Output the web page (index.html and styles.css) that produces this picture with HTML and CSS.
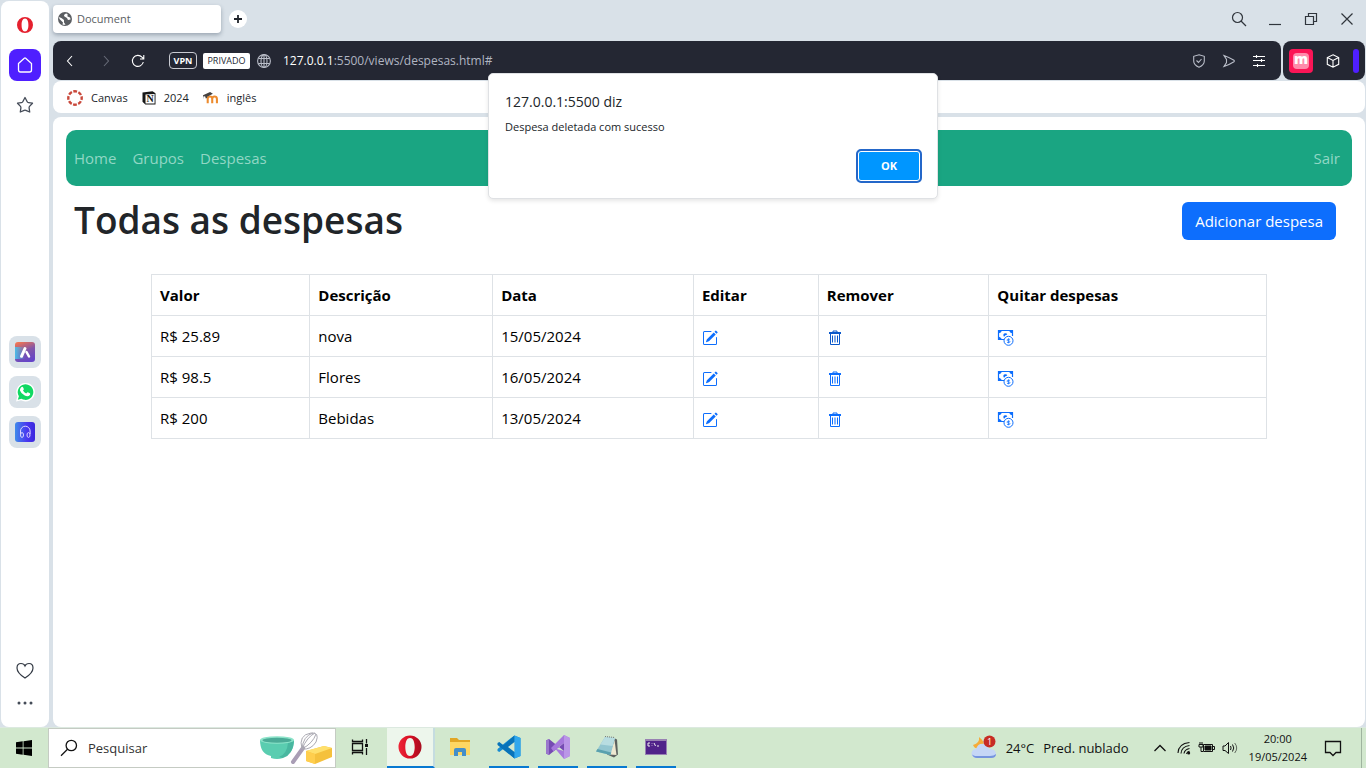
FILE: index.html
```html
<!DOCTYPE html>
<html lang="pt-BR">
<head>
<meta charset="utf-8">
<title>Document</title>
<link rel="stylesheet" href="styles.css">
</head>
<body>
<svg class="defs" aria-hidden="true">
  <symbol id="edit" viewBox="0 0 16 16"><path d="M15.502 1.94a.5.5 0 0 1 0 .706L14.459 3.69l-2-2L13.502.646a.5.5 0 0 1 .707 0l1.293 1.293zm-1.75 2.456-2-2L4.939 9.21a.5.5 0 0 0-.121.196l-.805 2.414a.25.25 0 0 0 .316.316l2.414-.805a.5.5 0 0 0 .196-.12l6.813-6.814z" fill="currentColor"/><path d="M1 13.500A1.500 1.500 0 0 0 2.500 15h11a1.500 1.500 0 0 0 1.500-1.500v-6a.5.5 0 0 0-1 0v6a.5.5 0 0 1-.5.5h-11a.5.5 0 0 1-.5-.5v-11a.5.5 0 0 1 .5-.5H9a.5.5 0 0 0 0-1H2.500A1.500 1.500 0 0 0 1 2.500z" fill="currentColor"/></symbol>
  <symbol id="trash" viewBox="0 0 16 16"><path d="M2 2.500h12M2 3.500h12M6 2V1h4v1M3.500 4v10.500h9V4" fill="none" stroke="currentColor"/><path d="M5.500 5.500v7M10.500 5.500v7" stroke="currentColor"/><path d="M8 5.500v7" stroke="currentColor" stroke-width="2" opacity=".5"/></symbol>
  <symbol id="cash" viewBox="0 0 17 17"><path d="M7 10.500H1.500v-9h14V7" fill="none" stroke="currentColor" stroke-width="1.200"/><path d="M1 1h4Q4.500 4 1 4.500zM16 1h-4q.5 3 4 3.500zM1 11h4Q4.500 8 1 7.500zM6.500 7q-.6-2.500 1.700-2.700Q10 4.200 10.300 5.500 8 6 7.500 7.500 6.800 7.500 6.500 7z" fill="currentColor"/><circle cx="11.500" cy="11.800" r="4.500" fill="#fff" stroke="currentColor"/><path d="M13 10.300h-2q-1 0-1 .8t1 .8h1q1 0 1 .8t-1 .8h-2M11.500 9.300v5" fill="none" stroke="currentColor" stroke-width=".7"/></symbol>
</svg>

<div class="browser">
  <nav class="sidebar" aria-label="Barra lateral">
    <button class="side-btn" aria-label="Opera"><svg width="18" height="18" viewBox="0 0 18 18"><path fill="#e5202e" fill-rule="evenodd" d="M9 1a8 8 0 1 1 0 16A8 8 0 0 1 9 1zm0 1.500C6.500 2.500 5.600 5.500 5.600 9S6.500 15.500 9 15.500s3.400-3 3.400-6.500S11.500 2.500 9 2.500z"/></svg></button>
    <button class="side-btn home" aria-label="Início"><svg width="18" height="18" viewBox="0 0 18 18" fill="none" stroke="#fff" stroke-width="1.300"><path d="M2.500 7.500 8.300 2.200q.7-.5 1.400 0l5.800 5.300V14q0 2-2 2h-9q-2 0-2-2z"/></svg></button>
    <button class="side-btn" aria-label="Favoritos"><svg width="18" height="18" viewBox="0 0 18 18" fill="none" stroke="#444b57" stroke-width="1.300" stroke-linejoin="round"><path d="m9 1.500 2.200 4.200q.4.800 1.300.9l4 .6-3 3.200q-.5.600-.4 1.400l.6 4.200-3.900-1.700q-.8-.3-1.600 0L4.300 16l.6-4.200q.1-.8-.4-1.400l-3-3.200 4-.6q.9-.1 1.300-.9z"/></svg></button>
    <div class="side-apps">
      <button class="side-btn app" aria-label="Aria"><svg width="20" height="20" viewBox="0 0 20 20"><defs><linearGradient id="g1" x1=".2" y1="0" x2=".6" y2="1"><stop stop-color="#f27552"/><stop offset=".5" stop-color="#8155a8"/><stop offset="1" stop-color="#6545c8"/></linearGradient><linearGradient id="g2"><stop stop-color="#4cbce8"/><stop offset=".5" stop-color="#4cbce8" stop-opacity="0"/></linearGradient></defs><rect width="20" height="20" rx="3" fill="url(#g1)"/><rect y="5" width="20" height="12" fill="url(#g2)"/><path d="M6.500 14.300 10 6.500" stroke="#fff" stroke-width="3" stroke-linecap="round"/><path d="m11.500 10 2.500 4.500" stroke="#fff" stroke-width="2.500" stroke-linecap="round"/></svg></button>
      <button class="side-btn app" aria-label="WhatsApp"><svg width="20" height="20" viewBox="0 0 20 20"><path d="M1 19.500 2.300 14.500A9.300 9.300 0 1 1 6 18.300z" fill="#fff"/><path d="m2.800 17.800 1.100-3.600a7.800 7.800 0 1 1 2.500 2.500z" fill="#10d963"/><path d="M6 5.500q1.500-1.500 2.300.3l.5 1.300q.2.600-.8 1.500 1 2 3.200 3l1-1q.5-.5 1.100-.1l1.500.8q1 .6.100 1.800-2 2.100-5.200.5-3.800-2-4.700-5Q4.700 6.800 6 5.500z" fill="#fff"/></svg></button>
      <button class="side-btn app" aria-label="Player"><svg width="20" height="20" viewBox="0 0 20 20"><defs><linearGradient id="g3"><stop stop-color="#408bea"/><stop offset=".6" stop-color="#4a37f0"/><stop offset="1" stop-color="#3a27dd"/></linearGradient></defs><rect width="20" height="20" rx="3" fill="url(#g3)"/><path d="M5.500 12V9a4.800 4.800 0 0 1 9.600 0v3" stroke="#dcd5ff" fill="none"/><ellipse cx="7" cy="13" rx="1.500" ry="2.400" stroke="#dcd5ff" fill="none"/><ellipse cx="13.500" cy="13" rx="1.500" ry="2.400" stroke="#dcd5ff" fill="none"/></svg></button>
    </div>
    <div class="side-foot">
      <button class="side-btn" aria-label="Curtir"><svg width="18" height="18" viewBox="0 0 18 18" fill="none" stroke="#333a44" stroke-width="1.200"><path d="M9 16Q1 11 1 6 1 1.500 5 1.500q3 0 4 2.500Q10 1.500 13 1.500q4 0 4 4.500 0 5-8 10z"/></svg></button>
      <button class="side-btn" aria-label="Mais"><svg width="18" height="18" viewBox="0 0 18 18" fill="#444b57"><circle cx="3" cy="9" r="1.500"/><circle cx="9" cy="9" r="1.500"/><circle cx="15" cy="9" r="1.500"/></svg></button>
    </div>
  </nav>

  <div class="main">
    <header class="tabs">
      <div class="tab"><svg width="14" height="14" viewBox="0 0 14 14"><circle cx="7" cy="7" r="7" fill="#5b5e62"/><path d="M1 5q3 1 5 3v2.500L7.500 12.500Q6 13 4.500 12.500L5 10.500 1.500 7zM8 1.500Q5 3 6.500 4.500L9 6l1 2 2.500-.5Q12.500 6.500 12 5.500L9.500 4.500 9.500 2z" fill="#fff"/></svg><span>Document</span></div>
      <button class="new-tab" aria-label="Nova guia"><svg width="10" height="10" viewBox="0 0 10 10"><path d="M5 1v8M1 5h8" stroke="#20242b" stroke-width="1.800"/></svg></button>
      <div class="window-btns">
        <button aria-label="Pesquisar guias"><svg width="16" height="16" viewBox="0 0 16 16"><circle cx="6.500" cy="6.500" r="5"/><path d="m10 10 5 5"/></svg></button>
        <button aria-label="Minimizar"><svg width="16" height="16" viewBox="0 0 16 16"><path d="M2 13.500h12"/></svg></button>
        <button aria-label="Restaurar"><svg width="16" height="16" viewBox="0 0 16 16"><path d="M2.500 5.500h8v8h-8zM5.500 5V2.500h8v8H11"/></svg></button>
        <button aria-label="Fechar"><svg width="16" height="16" viewBox="0 0 16 16"><path d="m2.500 2.500 11 11m0-11-11 11"/></svg></button>
      </div>
    </header>

    <div class="toolbar">
      <div class="address">
        <div class="nav-btns">
          <button aria-label="Voltar"><svg width="14" height="14" viewBox="0 0 14 14"><path d="M9 2 4.500 7 9 12"/></svg></button>
          <button class="dim" aria-label="Avançar"><svg width="14" height="14" viewBox="0 0 14 14"><path d="m7 2 4.500 5L7 12"/></svg></button>
          <button aria-label="Recarregar"><svg width="14" height="14" viewBox="0 0 14 14"><path d="M12.300 8A5.500 5.500 0 1 1 11 3.200l1.500 1.500M12.800 1v4H9"/></svg></button>
        </div>
        <span class="vpn">VPN</span>
        <span class="private">PRIVADO</span>
        <svg class="globe" width="14" height="14" viewBox="0 0 14 14"><circle cx="7" cy="7" r="6.400"/><ellipse cx="7" cy="7" rx="3" ry="6.400"/><path d="M1.500 4.500h11M1.500 9.500h11M7 .6v12.800"/></svg>
        <span class="url"><b>127.0.0.1</b>:5500/views/despesas.html#</span>
        <div class="addr-actions">
          <button class="soft" aria-label="Segurança"><svg width="14" height="14" viewBox="0 0 14 14"><path d="m7 .8 5.300 1.500V7q0 4-5.300 6.200Q1.700 11 1.700 7V2.300zM4.500 6.500 6.500 8.500l3-3.500"/></svg></button>
          <button class="soft" aria-label="Enviar"><svg width="14" height="14" viewBox="0 0 14 14"><path d="M2 1.500q5.500 2 10 4.800.8.700 0 1.400Q7.500 10.500 2 12.500L4.500 8.500V5.500z"/></svg></button>
          <button aria-label="Configurações"><svg width="14" height="14" viewBox="0 0 14 14"><path d="M1 2.500h12M1 6.500h12M1 11.500h12M4.500 1v3M9.500 5v3M5.500 10v3"/></svg></button>
        </div>
      </div>
      <div class="extensions">
        <button class="m-logo"><span>m</span></button>
        <button aria-label="Extensões"><svg width="14" height="14" viewBox="0 0 14 14"><path d="m7 .8 5.700 2.700v6.800L7 13.200l-5.700-2.900V3.500zM1.300 3.500 7 6.500l5.700-3M7 6.500v6.700"/></svg></button>
        <i class="handle"></i>
      </div>
    </div>

    <nav class="bookmarks" aria-label="Favoritos">
      <a href="#"><svg width="16" height="16" viewBox="0 0 16 16"><circle cx="8" cy="8" r="6.700" fill="none" stroke="#c9483b" stroke-width="2.400" stroke-dasharray="3.760 1.500" stroke-dashoffset="1.900"/></svg>Canvas</a>
      <a href="#"><svg width="14" height="14" viewBox="0 0 14 14"><path d="M.5 1.500 10.500.3l3 1.900v11.300H3.300L.5 10.800z" fill="#171717"/><path d="M3.500 3.500 12.600 3v9.500H3.500z" fill="#fff"/><text x="8" y="11" text-anchor="middle" class="n-mark">N</text></svg>2024</a>
      <a href="#"><svg width="16" height="14" viewBox="0 0 17 14"><path d="M5 12.500V7.800q.2-2.300 2.400-2.300T9.800 7.800v4.700M9.800 8q.2-2.500 2.500-2.500t2.500 2.500v4.500" fill="none" stroke="#ed8b2d" stroke-width="2.200"/><path d="m0 4 7.500-3.500 3 2-6 3.300L4.300 7 3 7.500l-.8-2.300-1.700.3v3z" fill="#464241"/></svg>inglês</a>
    </nav>

    <main class="page">
      <nav class="navbar" aria-label="Principal">
        <a href="#">Home</a><a href="#">Grupos</a><a href="#">Despesas</a><a href="#" class="logout">Sair</a>
      </nav>
      <div class="title-row">
        <h1>Todas as despesas</h1>
        <button class="add">Adicionar despesa</button>
      </div>
      <table>
        <colgroup><col class="c1"><col class="c2"><col class="c3"><col class="c4"><col class="c5"><col class="c6"></colgroup>
        <thead><tr><th>Valor</th><th>Descrição</th><th>Data</th><th>Editar</th><th>Remover</th><th>Quitar despesas</th></tr></thead>
        <tbody>
          <tr><td>R$ 25.89</td><td>nova</td><td>15/05/2024</td><td><a href="#" aria-label="Editar nova"><svg class="ic"><use href="#edit"/></svg></a></td><td><a href="#" class="active" aria-label="Remover nova"><svg class="ic"><use href="#trash"/></svg></a></td><td><a href="#" aria-label="Quitar nova"><svg class="ic cash"><use href="#cash"/></svg></a></td></tr>
          <tr><td>R$ 98.5</td><td>Flores</td><td>16/05/2024</td><td><a href="#" aria-label="Editar Flores"><svg class="ic"><use href="#edit"/></svg></a></td><td><a href="#" aria-label="Remover Flores"><svg class="ic"><use href="#trash"/></svg></a></td><td><a href="#" aria-label="Quitar Flores"><svg class="ic cash"><use href="#cash"/></svg></a></td></tr>
          <tr><td>R$ 200</td><td>Bebidas</td><td>13/05/2024</td><td><a href="#" aria-label="Editar Bebidas"><svg class="ic"><use href="#edit"/></svg></a></td><td><a href="#" aria-label="Remover Bebidas"><svg class="ic"><use href="#trash"/></svg></a></td><td><a href="#" aria-label="Quitar Bebidas"><svg class="ic cash"><use href="#cash"/></svg></a></td></tr>
        </tbody>
      </table>
    </main>

    <div class="dialog" role="alertdialog" aria-labelledby="dlg-title" aria-describedby="dlg-text">
      <h2 id="dlg-title">127.0.0.1:5500 diz</h2>
      <p id="dlg-text">Despesa deletada com sucesso</p>
      <button class="ok">OK</button>
    </div>
  </div>
</div>

<footer class="taskbar">
  <button class="start" aria-label="Iniciar"><svg width="16" height="16" viewBox="0 0 16 16"><path d="M0 2.300 6.700 1.300v6.200H0zM7.500 1.200 16 0v7.500H7.500zM0 8.400h6.700v6.300L0 13.700zM7.500 8.400H16V16l-8.500-1.200z"/></svg></button>
  <label class="search">
    <svg width="18" height="18" viewBox="0 0 18 18" fill="none" stroke="#111" stroke-width="1.300"><circle cx="11.300" cy="6.500" r="5.200"/><path d="M7.500 10.300 1 16.800"/></svg>
    <input type="text" placeholder="Pesquisar" aria-label="Pesquisar">
    <svg width="74" height="34" viewBox="0 0 74 34"><path d="M1 9q0 14 11 16v2q6 2 12 0v-2q11-2 11-16z" fill="#5acdb0"/><path d="M24 27q10-3 11-17l-6 2q-1 11-9 14z" fill="#49b7a0"/><ellipse cx="18" cy="9" rx="17" ry="3.800" fill="#8de4ca"/><ellipse cx="18" cy="9.300" rx="14.500" ry="2.500" fill="#4bab97"/><path d="m34 31 10-14" stroke="#a99eb5" stroke-width="4" stroke-linecap="round"/><g fill="none" stroke="#aaa9b2"><path d="M43 18Q39 4 52 2q9-1 5 9-5 8-14 7z"/><path d="M43 18Q44 5 54 2M43 18Q54 12 57 3M43 18Q48 6 56 2"/></g><path d="m47 20 18-5 8 2v9l-17 7-9-3z" fill="#f5c13d"/><path d="m47 20 18-5 8 2-17 6z" fill="#ffe06c"/><path d="m47 20 9 3v10l-9-3z" fill="#ffce4d"/></svg>
  </label>
  <div class="apps">
    <button class="task" aria-label="Visão de tarefas"><svg width="18" height="18" viewBox="0 0 18 18" fill="none" stroke="#111" stroke-width="1.300"><path d="M1.500 5.500h10v7h-10zM1.500 1.500v2h10v-2M1.500 16.500v-2h10v2M15.500 1v4.500M15.500 10v7"/><path d="M14 6h3v3h-3z" fill="#111" stroke="none"/></svg></button>
    <button class="task current" aria-label="Opera"><svg width="24" height="24" viewBox="0 0 24 24"><defs><linearGradient id="g4"><stop stop-color="#ee2637"/><stop offset=".5" stop-color="#d70e24"/><stop offset="1" stop-color="#a70d1f"/></linearGradient></defs><path fill="url(#g4)" fill-rule="evenodd" d="M12 .5a11.500 11.500 0 1 1 0 23 11.500 11.500 0 0 1 0-23zM12 3C8.300 3 7.300 8 7.300 12S8.300 21 12 21s4.700-5 4.700-9S15.700 3 12 3z"/></svg></button>
    <button class="task" aria-label="Explorador de Arquivos"><svg width="22" height="20" viewBox="0 0 22 20"><path d="M1 1h7l2 2h11v15H1z" fill="#e1a625"/><path d="M1 5h20v13H1z" fill="#fdd663"/><path d="M5 19v-6q0-2 2-2h8q2 0 2 2v6h-4v-4H9v4z" fill="#458fc9"/></svg></button>
    <button class="task open" aria-label="Visual Studio Code"><svg width="24" height="24" viewBox="0 0 24 24"><path d="M17.500.5 23.500 3v18l-6 2.500L6.500 13.800 2.300 17 .5 16v-2L14 3z" fill="#168bd2"/><path d="m.5 8 1.800-1L6.500 10.200 17.500.5v23L.5 10z" fill="#0873b9"/><path d="M17.500.5 23.500 3v18l-6 2.500z" fill="#30a7ed"/><path d="M17.500 7v10L11 12z" fill="#d2e8ce"/><path d="M0 10.200 2.500 12 0 13.800z" fill="#d2e8ce"/></svg></button>
    <button class="task open" aria-label="Visual Studio"><svg width="24" height="24" viewBox="0 0 24 24"><path d="M0 5.500 3 4l15 12v-8L3 20l-3-1.500z" fill="#764bb3"/><path d="M0 5.500 3 4v16l-3-1.500z" fill="#9a77cc"/><path d="m18 0 6 3v18l-6 3-9-10.500L18 16V8L7.500 16.500 5 13z" fill="#a678dc"/><path d="m18 0 6 3v18l-6 3z" fill="#ba96e7"/></svg></button>
    <button class="task open" aria-label="Bloco de Notas"><svg width="24" height="24" viewBox="0 0 24 24"><path d="m19 3 3 1.500 1 15-4 3-7-3z" fill="#5d6260"/><path d="m19.500 5 2 15-7-.5z" fill="#eee8d1"/><path d="M10 2 20 3l-4.500 17L1 16.500z" fill="#93c6d0"/><path d="m10 2 10 1-2.500 8-12-1.500z" fill="#b8dde1"/><path d="m1 16.500 14.500 3.500.7-2.500L2.500 14z" fill="#5aa1ae"/><path d="m10 1.500 10 1" stroke="#777" stroke-dasharray="1 1"/></svg></button>
    <button class="task open" aria-label="Prompt de comando"><svg width="22" height="18" viewBox="0 0 22 18"><path fill="#9881b2" d="M0 1h22v16H0z"/><path fill="#50238a" d="M1 3h20v13H1z"/><path d="M5 5H3v3h2M7 5.500v.5M7 7.500V8M9 5l1.500 3M12 8h2" fill="none" stroke="#eee"/></svg></button>
  </div>
  <div class="tray">
    <button class="weather"><svg width="26" height="26" viewBox="0 0 26 26"><path d="M8 2q1 6-6 8 2 5 8 3 6-5-2-11z" fill="#f6ac38"/><path d="M5 23a4.500 4.500 0 0 1 0-9Q7 8 13 9q4 1 5 5 7 0 7 5 0 4-5 4z" fill="#c5d6f6"/><path d="M1 19q1 4 5 4h14q5 0 5-4-2 2-6 2H6q-4 0-5-2z" fill="#7594de"/><circle cx="18.500" cy="6.500" r="6" fill="#c72c24"/><text x="18.500" y="10" text-anchor="middle" class="badge">1</text></svg><span>24°C</span><span>Pred. nublado</span></button>
    <div class="status">
      <svg width="14" height="14" viewBox="0 0 14 14"><path d="m1.500 10 5.500-5.500 5.500 5.500" stroke-width="1.300"/></svg>
      <svg width="14" height="14" viewBox="0 0 14 14"><path d="M1 12Q1.500 2.500 12.500 1.500M4 12.500Q4.500 5.500 12.500 4.500M7 12.500Q7.500 8.500 12.500 7.500M9.500 13q.5-2.500 3-2.800" stroke-width="1.100"/><circle cx="11.700" cy="12" r="1.500" fill="#111" stroke="none"/></svg>
      <svg width="17" height="14" viewBox="0 0 17 14"><path d="M5.500 3.500h9v7h-9zM15 5.500h1.500v3H15M1 3.500h4v2.500H1zM2 3.500V1M4 3.500V1M3 6v4.500h2"/><path d="M7 5h6v4H7z" fill="#111"/></svg>
      <svg width="17" height="14" viewBox="0 0 17 14"><path d="M1 5h2l3.500-3.500v11L3 9.500H1zM8.500 5q1.200 2 0 4M10.500 3.500q2.500 3.500 0 7"/><path d="M12.700 2q4 5 0 10" opacity=".6"/></svg>
    </div>
    <div class="clock"><time>20:00</time><time>19/05/2024</time></div>
    <button class="notif" aria-label="Notificações"><svg width="18" height="18" viewBox="0 0 18 18" fill="none" stroke="#111" stroke-width="1.300"><path d="M1.500 2.500h15v11H12l-3 3-3-3H1.500z"/></svg></button>
  </div>
</footer>
</body>
</html>
```
FILE: styles.css
```css
* { box-sizing: border-box; }
body {
  margin: 0;
  height: 100vh;
  display: flex;
  flex-direction: column;
  background: #d9e1e8;
  font-family: "Open Sans", "Noto Sans", sans-serif;
  font-size: 15px;
  line-height: 24px;
  color: #212529;
  overflow: hidden;
}
button {
  font: inherit;
  color: inherit;
  padding: 0;
  border: 0;
  background: none;
  display: flex;
  align-items: center;
  justify-content: center;
}
a { text-decoration: none; color: inherit; }
svg { flex: none; }
.defs { position: absolute; width: 0; height: 0; }

.browser { flex: 1; display: flex; gap: 4px; padding-left: 1px; min-height: 0; }

.sidebar {
  width: 48px;
  margin-top: 1px;
  padding: 8px 0;
  display: flex;
  flex-direction: column;
  align-items: center;
  gap: 8px;
  background: #fff;
  border-radius: 8px;
}
.side-btn { width: 32px; height: 32px; border-radius: 8px; }
.home { background: #4f1fff; }
.side-apps { flex: 1; display: flex; flex-direction: column; justify-content: center; gap: 8px; padding-top: 8px; }
.app { background: #d9e1e8; }

.main { position: relative; flex: 1; display: flex; flex-direction: column; min-width: 0; }

.tabs { height: 41px; display: flex; align-items: center; gap: 8px; padding-bottom: 3px; }
.tab {
  width: 168px;
  height: 28px;
  padding-left: 5px;
  display: flex;
  align-items: center;
  gap: 5px;
  font-size: 11px;
  color: #5b5e62;
  background: #fff;
  border-radius: 4px;
  box-shadow: 0 2px 4px rgba(60, 75, 95, .4);
}
.new-tab { width: 18px; height: 18px; border-radius: 9px; background: #fff; }
.window-btns { margin-left: auto; margin-right: 11px; display: flex; gap: 20px; }
.window-btns svg { fill: none; stroke: #30353c; stroke-width: 1.2; }

.toolbar { height: 39px; display: flex; gap: 2px; padding-right: 1px; }
.address, .extensions { display: flex; align-items: center; background: #242733; border-radius: 8px; }
.address { flex: 1; padding: 0 15px 0 10px; }
.toolbar svg { fill: none; stroke: #fff; stroke-width: 1.1; }
.nav-btns { display: flex; gap: 20px; }
.toolbar .dim svg { stroke: #676b78; }
.toolbar .soft svg, .toolbar .globe { stroke: #b9bdc8; }
.vpn {
  margin-left: 24px;
  width: 28px;
  line-height: 15px;
  text-align: center;
  border: 1px solid #c9cbd2;
  border-radius: 4px;
  font-size: 9px;
  font-weight: 700;
  color: #fff;
}
.private {
  margin: 0 7px 0 6px;
  width: 47px;
  line-height: 16px;
  text-align: center;
  border-radius: 2px;
  background: #fff;
  color: #242733;
  font-size: 9px;
}
.url { margin-left: 12px; font-size: 12px; color: #b0b5c2; }
.url b { font-weight: 500; color: #fff; }
.addr-actions { margin-left: auto; display: flex; gap: 16px; }
.extensions { width: 82px; padding-left: 6px; }
.extensions button + button { margin: 0 13px; }
.m-logo { width: 24px; height: 24px; border-radius: 4px; background: #fb1556; }
.m-logo span {
  width: 16px;
  height: 16px;
  border-radius: 4px;
  background: #ff8bab;
  color: #fff;
  font-weight: 800;
  font-size: 14px;
  line-height: 12px;
}
.handle { width: 6px; height: 24px; border-radius: 3px; background: #4f1fff; }

.bookmarks {
  height: 32px;
  margin: 1px 1px 0 0;
  padding: 2px 0 0 14px;
  display: flex;
  align-items: center;
  gap: 14px;
  background: #fff;
  border-radius: 8px;
  font-size: 11px;
}
.bookmarks a { display: flex; align-items: center; gap: 8px; }
.n-mark { font: 700 10px "Liberation Serif", serif; fill: #171717; }

.page { flex: 1; margin: 4px 1px 0 0; padding: 13px; background: #fff; border-radius: 8px; }
.navbar {
  height: 56px;
  padding: 0 12px 0 8px;
  display: flex;
  align-items: center;
  gap: 16px;
  background: #1aa582;
  color: #91d7c5;
  border-radius: 10px;
}
.logout { margin-left: auto; }
.title-row { margin: 10px 16px 0 8px; display: flex; justify-content: space-between; align-items: center; }
h1 { margin: 0; padding-bottom: 2px; font-size: 37px; font-weight: 600; line-height: 48px; }
.add { height: 38px; padding: 0 13px; border-radius: 6px; background: #0d6efd; color: #fff; }

table { width: 1116px; max-width: 87%; margin: 28px auto 0; border-collapse: collapse; table-layout: fixed; color: #000; }
th, td { height: 41px; padding: 8px; border: 1px solid #dee2e6; text-align: left; font-weight: 400; }
th { font-weight: 700; }
td a { display: flex; color: #0d6efd; }
td .active { color: #0a58ca; }
.ic { width: 16px; height: 16px; margin-top: 3px; }
.cash { width: 17px; height: 17px; }
.c1 { width: 14.2%; }
.c2 { width: 16.4%; }
.c3 { width: 18%; }
.c4 { width: 11.2%; }
.c5 { width: 15.3%; }
.c6 { width: 24.9%; }

.dialog {
  position: absolute;
  top: 73px;
  left: 435px;
  width: 450px;
  padding: 16px 15px 15px 16px;
  display: flex;
  flex-direction: column;
  background: #fff;
  border: 1px solid #dfe1e4;
  border-radius: 5px;
  box-shadow: 0 2px 4px rgba(0, 0, 0, .1);
}
.dialog h2 { margin: 0; font-size: 14px; font-weight: 500; line-height: 24px; }
.dialog p { margin: 3px 0 12px; font-size: 11px; line-height: 20px; }
.ok {
  align-self: flex-end;
  width: 66px;
  height: 34px;
  border: 2px solid #2467c9;
  border-radius: 5px;
  box-shadow: inset 0 0 0 1px #fff;
  background: #0096ff;
  color: #fff;
  font-size: 11px;
  font-weight: 700;
}

.taskbar { height: 41px; display: flex; align-items: stretch; background: #d2e8ce; color: #111; border-top: 1px solid #dce9e0; }
.start { width: 48px; }
.search { width: 288px; padding: 0 2px 0 11px; display: flex; align-items: center; gap: 10px; background: #fff; border: 1px solid #c5cbc3; }
.search input { flex: 1; min-width: 0; padding: 0; border: 0; outline: 0; font: inherit; font-size: 13px; background: none; }
.search input::placeholder { color: #333; opacity: 1; }
.apps { display: flex; gap: 9px; margin-left: 4px; }
.task { width: 40px; border-bottom: 2px solid transparent; }
.current { width: 48px; margin: 0 -4px 0 -2px; background: #edf6ec; border-bottom-color: #0879d1; border-right: 2px solid #c5dce0; }
.open { border-bottom-color: #0879d1; }
.tray { margin-left: auto; display: flex; align-items: center; padding-right: 4px; }
.weather { gap: 9px; font-size: 13px; }
.badge { font-size: 9px; fill: #fff; }
.status { margin: 0 10px 0 24px; display: flex; align-items: center; gap: 10px; }
.status svg + svg + svg { margin-left: -3px; }
.status svg { fill: none; stroke: #111; }
.clock { display: flex; flex-direction: column; align-items: center; font-size: 11px; line-height: 18px; }
.notif { width: 36px; height: 40px; margin-left: 8px; }
.tray::after { content: ""; width: 1px; height: 40px; margin-left: 10px; background: #9fb49f; }
```
